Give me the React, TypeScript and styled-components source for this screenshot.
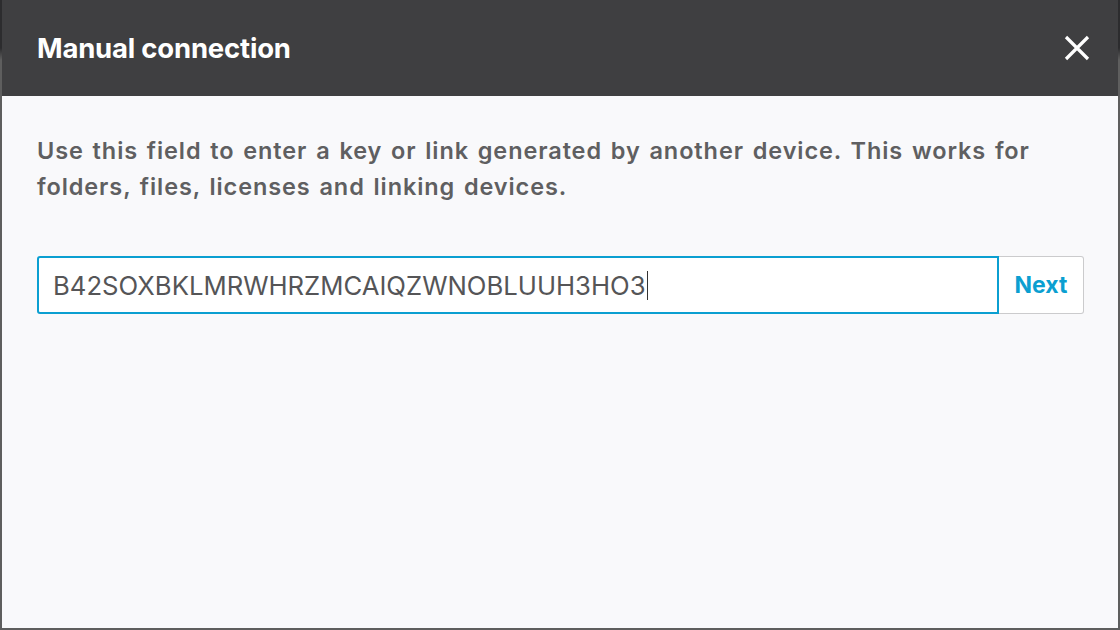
import React from "react";
import styled, { createGlobalStyle } from "styled-components";

const Global = createGlobalStyle`
  html, body { margin: 0; padding: 0; }
  body {
    width: 1120px;
    height: 630px;
    overflow: hidden;
    background: linear-gradient(#2c2c2e 0px, #2c2c2e 48px, #5e5e5e 60px, #5e5e5e 100%);
    font-family: Inter, "Noto Sans", sans-serif;
  }
`;

const Modal = styled.div`
  margin: 0 2px;
  height: 628px;
  display: flex;
  flex-direction: column;
  background: #f9f9fb;
`;

const Header = styled.header`
  height: 96px;
  flex: none;
  display: flex;
  align-items: center;
  justify-content: space-between;
  padding: 0 28px 0 35px;
  background: #3f3f41;
`;

const Title = styled.h1`
  margin: 0;
  color: #ffffff;
  font-size: 27.5px;
  font-weight: 700;
  letter-spacing: -0.2px;
`;

const CloseButton = styled.button`
  width: 26px;
  height: 26px;
  padding: 0;
  border: 0;
  background: transparent;
  display: flex;
  align-items: center;
  justify-content: center;
  cursor: pointer;
`;

const Body = styled.div`
  padding: 37px 35px 0 35px;
  display: flex;
  flex-direction: column;
  gap: 51px;
`;

const Description = styled.p`
  margin: 0;
  max-width: 1010px;
  color: #5f5f61;
  font-size: 23.5px;
  font-weight: 600;
  line-height: 36px;
  letter-spacing: 0.9px;
  word-spacing: 2px;
`;

const Row = styled.div`
  display: flex;
  height: 58px;
  width: 1047px;
`;

const Field = styled.div`
  flex: 1;
  display: flex;
  align-items: center;
  padding: 0 14px;
  background: #ffffff;
  border: 2px solid #0b9fd1;
  border-radius: 3px 0 0 3px;
  color: #555557;
  font-size: 25.7px;
  font-weight: 400;
`;

const Caret = styled.span`
  display: inline-block;
  width: 1.5px;
  height: 29px;
  margin-left: 1px;
  background: #333;
`;

const NextButton = styled.button`
  width: 85px;
  flex: none;
  border: 1px solid #cbcbcd;
  border-left: 0;
  border-radius: 0 3px 3px 0;
  background: #ffffff;
  color: #0b9fd1;
  font-family: Inter, "Noto Sans", sans-serif;
  font-size: 23px;
  font-weight: 700;
  cursor: pointer;
`;

export default function App() {
  return (
    <>
      <Global />
      <Modal>
        <Header>
          <Title>Manual connection</Title>
          <CloseButton aria-label="Close">
            <svg width="26" height="26" viewBox="0 0 26 26">
              <path d="M2 2 L24 24 M24 2 L2 24" stroke="#ffffff" strokeWidth="3.2" strokeLinecap="butt" />
            </svg>
          </CloseButton>
        </Header>
        <Body>
          <Description>
            Use this field to enter a key or link generated by another device. This works for
            folders, files, licenses and linking devices.
          </Description>
          <Row>
            <Field>
              B42SOXBKLMRWHRZMCAIQZWNOBLUUH3HO3
              <Caret />
            </Field>
            <NextButton>Next</NextButton>
          </Row>
        </Body>
      </Modal>
    </>
  );
}
